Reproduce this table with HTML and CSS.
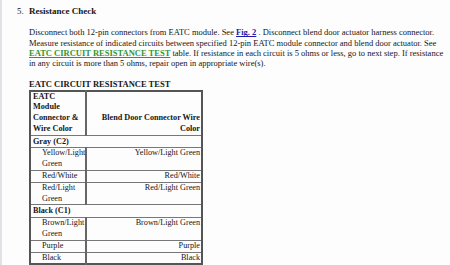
FILE: index.html
```html
<!DOCTYPE html>
<html>
<head>
<meta charset="utf-8">
<link rel="stylesheet" href="styles.css">
</head>
<body>
<div class="page">
  <div class="step">
    <div class="num">5.</div>
    <div class="content">
      <div class="title">Resistance Check</div>
      <p class="para">Disconnect both 12-pin connectors from EATC module. See <a class="fig">Fig. 2</a> . Disconnect blend door actuator harness connector. Measure resistance of indicated circuits between specified 12-pin EATC module connector and blend door actuator. See <a class="tlink">EATC CIRCUIT RESISTANCE TEST</a> table. If resistance in each circuit is 5 ohms or less, go to next step. If resistance in any circuit is more than 5 ohms, repair open in appropriate wire(s).</p>
      <div class="caption">EATC CIRCUIT RESISTANCE TEST</div>
      <table class="rt">
        <colgroup><col class="col1"><col class="col2"></colgroup>
        <tr class="head">
          <th class="c1">EATC Module Connector &amp; Wire Color</th>
          <th class="c2">Blend Door Connector Wire Color</th>
        </tr>
        <tr><td class="group" colspan="2">Gray (C2)</td></tr>
        <tr><td class="c1 ind">Yellow/Light Green</td><td class="c2">Yellow/Light Green</td></tr>
        <tr><td class="c1 ind">Red/White</td><td class="c2">Red/White</td></tr>
        <tr><td class="c1 ind">Red/Light Green</td><td class="c2">Red/Light Green</td></tr>
        <tr><td class="group" colspan="2">Black (C1)</td></tr>
        <tr><td class="c1 ind">Brown/Light Green</td><td class="c2">Brown/Light Green</td></tr>
        <tr><td class="c1 ind">Purple</td><td class="c2">Purple</td></tr>
        <tr><td class="c1 ind">Black</td><td class="c2">Black</td></tr>
      </table>
    </div>
  </div>
</div>
</body>
</html>
```
FILE: styles.css
```css
html, body {
  margin: 0;
  padding: 0;
}
body {
  background: #fdfdfe;
  font-family: "Liberation Serif", "Times New Roman", serif;
  color: #161616;
  width: 450px;
  height: 265px;
  overflow: hidden;
}
.page {
  border-left: 2px solid #e2e2e6;
  height: 265px;
  box-sizing: border-box;
}
.step {
  display: flex;
  padding: 5px 0 0 15px;
}
.num {
  width: 12px;
  font-size: 8.8px;
  line-height: 12px;
}
.content {
  width: 420px;
}
.title {
  font-weight: bold;
  font-size: 9px;
  line-height: 12px;
}
.para {
  margin: 10.4px 0 0 0;
  font-size: 8.5px;
  line-height: 10.2px;
}
.fig {
  color: #1c1ca8;
  font-weight: bold;
  text-decoration: underline;
}
.tlink {
  color: #339433;
  font-weight: bold;
  text-decoration: underline;
}
.caption {
  margin-top: 10.3px;
  font-weight: bold;
  font-size: 8.5px;
  line-height: 11px;
}
.rt {
  border-collapse: collapse;
  table-layout: fixed;
  border: 2px solid #555;
  width: 174px;
  font-size: 8.2px;
  line-height: 10.8px;
}
.rt .col1 {
  width: 56px;
}
.rt th, .rt td {
  border: 1px solid #777;
  padding: 0 1px 0 2px;
}
.rt th {
  vertical-align: bottom;
  font-weight: bold;
}
.rt th.c1 {
  text-align: left;
  padding-right: 3px;
}
.rt td {
  vertical-align: top;
}
.rt .c1 {
  border-right: 2px solid #666;
}
.rt .c2 {
  text-align: right;
}
.rt .group {
  font-weight: bold;
  text-align: left;
  padding-top: 1px;
}
.rt .ind {
  padding-left: 11px;
  padding-right: 0;
}
```
